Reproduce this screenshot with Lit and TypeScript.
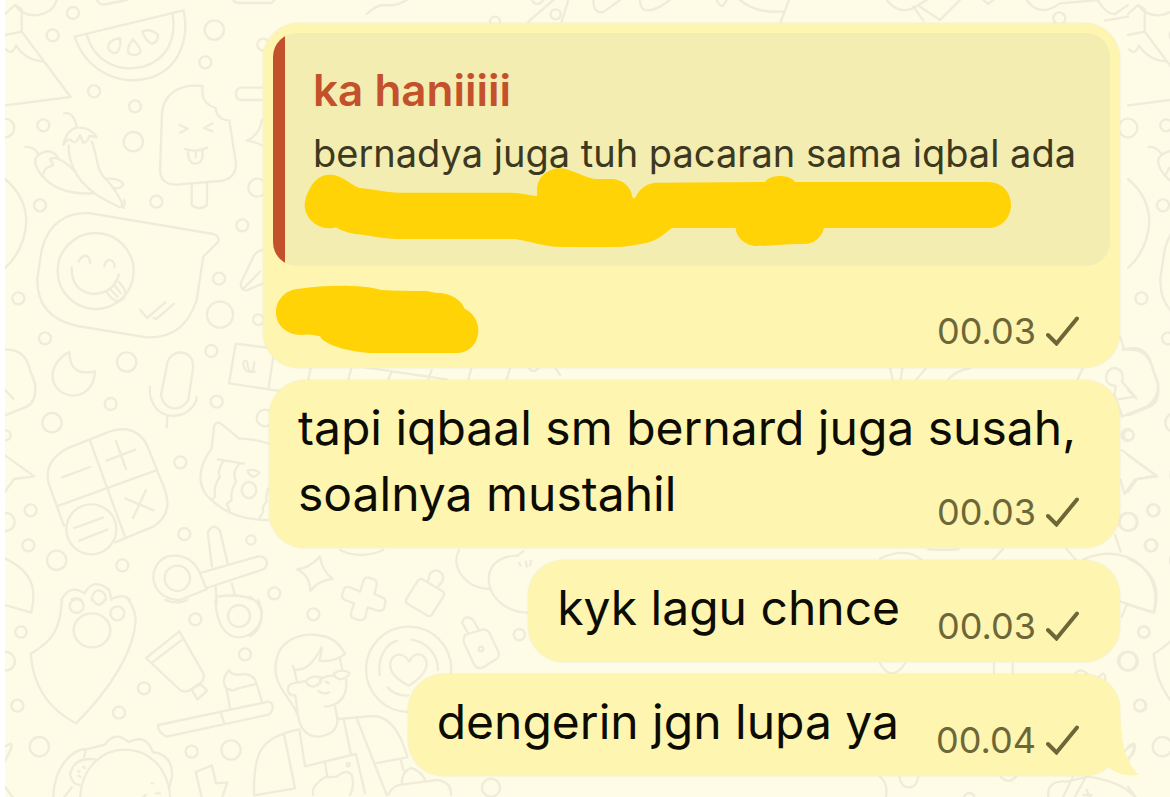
import { LitElement, html, svg, css, nothing } from "lit";
import { customElement, property } from "lit/decorators.js";

const dots = (list: number[][]) => list.map(([x, y, r]) => svg`<circle cx=${x} cy=${y} r=${r}></circle>`);

@customElement("chat-wallpaper")
class ChatWallpaper extends LitElement {
  static styles = css`
    :host { display: block; }
    svg { display: block; width: 1170px; height: 797px; }
    .line { fill: none; stroke: #efecd9; stroke-width: 7; stroke-linecap: round; stroke-linejoin: round; }
    .edge { fill: #ffffff; }
  `;

  render() {
    return html`<svg viewBox="0 0 1170 797" aria-hidden="true">
      <defs>
        <g id="tile" class="line">
          <g transform="scale(.33333)">
            ${dots([[219,39,18],[158,106,18],[643,90,29],[616,187,18],[790,134,18],[282,274,18],[405,319,18],[130,376,18],[400,425,29],[15,384,28],[772,563,27]])}
            <path d="M15 42L45 15L65 28V95L15 105M65 95L212 291L15 316M45 15Q68 48 110 46Q160 38 170 0M18 148Q36 168 48 136Q76 180 128 184"/>
            <path d="M291 0Q300 18 320 12L380 0M700 0Q703 9 715 9H810Q820 9 823 0"/>
            <path d="M224 110L551 31C570 120 535 205 455 232C350 263 255 205 224 110ZM260 102C280 180 350 220 430 200C500 178 530 120 518 42"/>
            <path d="M360 114Q325 120 324 143Q332 163 350 158Q364 145 360 114ZM398 118Q378 145 386 160Q404 172 421 158Q426 146 398 118ZM427 94Q450 84 474 104Q476 124 457 131Q440 128 427 94Z"/>
            <path d="M608 258C540 250 490 280 486 340L480 510Q482 555 530 554L660 543Q708 538 708 490L688 361Q650 360 647 324Q600 310 608 258M575 555V615Q598 635 621 615V550"/>
            <path d="M538 375L563 386L540 398M637 370L612 384L637 394M555 447Q590 458 622 443M564 452Q564 492 587 491Q612 490 607 450M587 456V472"/>
            <path d="M192 340Q222 335 230 382M190 434Q200 390 230 383Q270 380 290 411L268 408Q262 428 250 428L240 405Q230 432 218 425Q206 410 190 434M206 436C205 500 240 560 316 600M275 425C295 470 285 510 320 540Q350 570 372 624"/>
            <path d="M76 441Q100 438 117 464Q150 440 174 473L150 476L160 495L138 505L126 528Q90 480 117 464M130 530Q175 585 280 580M170 475Q200 485 225 515M320 536Q360 535 370 552Q365 568 338 564"/>
            <path d="M785 263H722Q708 266 708 281Q708 298 722 300H785M785 360Q780 405 740 422Q765 425 785 436"/>
            <path d="M15 537Q78 590 79 665Q74 750 15 804"/>
          </g>
          <g transform="translate(0 200) scale(.33333)">
            ${dots([[120,16,18],[469,5,18],[727,76,18],[657,236,18],[660,344,39],[775,359,16],[55,295,18],[135,415,18],[380,486,29],[634,453,18]])}
            <path d="M316 0L358 22Q380 20 372 0M272 40L640 102Q660 108 655 125L610 170L590 300C565 375 520 415 440 412L232 378C150 360 110 310 112 235L125 150C145 65 205 35 272 40Z"/>
            <circle cx="287" cy="213" r="114"/>
            <path d="M236 184Q248 162 262 169Q270 174 270 190M313 200Q315 180 330 180Q344 184 344 202M215 202Q214 275 280 282Q340 280 357 224M322 278Q335 300 352 304Q382 300 374 268L357 246M333 270L352 290M346 258L362 280"/>
            <path d="M421 330L441 354L496 307M461 354L468 358L522 311"/>
            <path d="M208 456C210 510 235 525 285 514C282 565 250 588 215 587C145 577 135 495 208 456Z"/>
            <path d="M500 500C505 440 585 445 579 505L565 600C540 640 490 630 483 585ZM450 560Q448 590 455 600M590 590L588 600"/>
            <path d="M840 448L707 431L687 550L840 573M820 470L805 568M785 150Q765 155 758 175L722 250Q722 272 740 271L790 250M728 268L780 215M764 515Q742 520 742 486Q730 475 730 495Q735 520 758 515L763 487"/>
            <path d="M15 449Q75 445 90 510L105 550Q110 590 95 605M15 570L40 596"/>
          </g>
          <g transform="translate(0 400) scale(.33333)">
            ${dots([[332,12,18],[650,5,18],[156,68,29],[541,187,18],[795,54,25],[92,331,18],[85,436,18],[170,481,29],[553,402,18],[753,420,14],[367,496,18],[17,366,27],[17,106,15],[532,535,38]])}
            <path d="M455 0Q470 45 520 48Q570 45 590 0M502 48L500 82M15 46L80 20Q98 10 100 0M15 166L103 229L42 237L15 275"/>
            <path d="M200 146L330 94Q410 70 443 140L493 265Q522 340 460 380L345 427M192 378L146 250Q130 185 200 146M270 122L374 408M176 317L468 211"/>
            <circle cx="274" cy="388" r="75"/>
            <path d="M186 232L270 201M320 182L406 149M348 123L378 207M376 295L460 331M438 270L399 354M223 384L309 353M238 422L322 389"/>
            <path d="M805 130Q755 115 718 116L662 70Q647 62 642 80L635 145C580 220 600 275 640 305Q700 360 805 360M653 178L732 191M670 184Q650 215 660 230Q640 255 645 290L635 300M718 192Q695 215 708 245Q690 275 695 300L680 312L690 333M742 212Q758 245 778 218Q765 205 742 212M805 265Q795 290 800 305Q785 320 790 335L778 355"/>
            <ellipse cx="747" cy="270" rx="22" ry="24"/>
            <path d="M620 568L540 600C450 600 435 500 500 470C560 455 590 495 600 520ZM604 518L775 469Q800 468 801 490Q800 505 785 510L620 564M636 500L623 398Q640 365 660 393L683 490M647 560L650 610M695 550L705 585M650 590Q720 580 755 598"/>
            <path d="M15 475Q110 520 99 600M184 600Q210 550 254 580Q280 530 328 570L334 600M340 595Q370 580 390 600M274 600Q280 570 296 571Q318 575 318 600M215 598Q230 590 245 600"/>
          </g>
          <g transform="translate(0 600) scale(.33333)">
            ${dots([[230,18,21],[352,40,21],[63,96,17],[586,58,18],[735,163,18],[432,265,18],[357,338,18],[52,317,18],[118,440,29],[575,455,18],[693,450,29],[717,48,33],[17,184,28]])}
            <path d="M186 0C180 90 160 120 92 162C100 260 150 330 228 370C330 270 405 150 407 55Q402 20 385 0M279 0Q296 28 314 0M15 15L94 38L100 0M496 0Q530 15 562 0"/>
            <ellipse cx="276" cy="91" rx="55" ry="51"/>
            <path d="M538 94L438 174L540 270Q560 280 575 267L600 250Q615 240 610 220ZM545 120L460 185M575 268L602 253L622 272L592 299Z"/>
            <path d="M646 0C650 80 680 112 717 112C760 110 790 70 785 30L775 0M690 325L680 268Q660 240 687 210Q695 230 735 222Q765 225 770 252L786 305M680 265L698 272L714 265L770 252M475 375L805 305Q820 310 818 325Q815 340 805 344L500 410Q470 395 475 375ZM662 338L673 371"/>
            <path d="M160 595C160 500 220 445 258 448L315 434Q345 390 385 426Q440 400 458 456Q520 465 516 530L508 560M258 448L252 472M240 595C250 400 500 400 511 595M285 478Q220 470 210 525Q220 555 238 555M190 595L215 562M235 512L238 516M236 527L241 531M250 500L254 505M430 590L438 585M468 580L480 580M455 550H459"/>
            <path d="M587 516L636 496L648 550L682 547L665 597M587 516L605 592M15 440Q55 410 15 482M15 560L40 595"/>
          </g>
        </g>
      </defs>
      <use href="#tile"></use>
      <use href="#tile" x="1123"></use>
      <g class="line" transform="translate(250 540) scale(.33333)">
        ${dots([[73,160,18],[190,223,18],[808,284,17],[693,327,7],[723,743,27],[295,674,5]])}
        <path d="M0 170Q35 190 35 230Q30 275 0 288M141 88Q180 85 210 49Q215 90 248 117Q205 120 181 153Q180 105 141 88Z"/>
        <path d="M342 118Q348 110 358 113L375 120Q382 125 380 135L373 162L398 173Q408 178 406 187L402 206Q395 215 380 211L353 202L345 235Q338 242 325 240L308 234Q301 230 303 218L312 190L285 180Q274 174 277 162L283 145Q290 138 300 142L330 155Z"/>
        <path d="M515 116L580 155Q584 160 580 170L545 225Q540 230 530 226L470 190Q465 183 470 175L505 120ZM535 120Q538 90 560 91Q585 98 578 122L564 140M655 281L636 248Q645 220 670 240L685 267M645 285L700 268Q710 268 718 278L745 335Q750 350 740 356L700 382Q685 390 673 375L642 308Q638 295 645 285"/>
        <path d="M270 30Q330 60 400 30M627 30C600 85 650 145 718 147M840 218C740 220 690 130 730 75Q760 45 800 48L820 34M808 70L812 76M828 65L830 80M843 62L840 76"/>
        <circle cx="476" cy="388" r="128"/>
        <path d="M389 405C382 350 410 310 442 302M484 299C530 305 565 345 564 390M412 442Q435 468 475 467M478 365C455 328 415 345 421 382C427 410 455 425 476 437C505 420 530 400 530 370C525 335 490 335 478 365Z"/>
        <path d="M144 528C125 470 65 440 78 365C90 290 165 280 200 285Q260 290 285 342Q250 368 208 362Q215 340 215 322C190 370 165 395 132 388L128 378M132 388L142 428L168 423M270 355L277 390M210 420Q225 405 252 408M252 400Q275 385 298 398Q295 415 270 418Q255 415 252 400M168 423Q185 405 213 412Q218 432 190 440Q170 438 168 423M142 428Q108 430 115 455Q120 470 136 465L144 528Q155 592 210 590Q265 580 262 535L255 499M289 420Q293 495 225 500M205 453Q220 465 237 457M227 425L237 430"/>
        <path d="M265 537L370 528C425 530 455 590 472 650M12 760C10 640 30 590 148 568L165 679L318 642L345 760M103 587L135 745L12 766M282 542L302 640M322 540L410 765M375 670L472 652M225 666L232 712L260 710Q290 685 305 705Q315 740 300 765M225 712Q180 740 190 765M452 658L460 690M415 765Q425 735 460 733L560 720Q605 725 603 765M455 733Q455 695 482 684Q510 690 525 718"/>
      </g>
      <g class="line" transform="translate(880 280) scale(.33333)">
        ${dots([[743,465,18],[743,725,27],[819,691,18],[812,796,18]])}
        <path d="M720 170L732 205M728 210Q790 190 810 240L832 305Q842 350 800 380L725 410M702 340L725 405M678 295Q680 265 704 264Q735 270 726 305L766 350L702 360L707 318Q680 315 678 295M592 300L608 265M725 510L828 586L765 598L734 642L722 600M705 765L722 815M610 838C700 800 780 830 815 900M30 264L38 298M67 264L62 298M110 298L138 265M205 298Q230 270 272 264M0 835Q80 800 125 840M340 838L368 808M560 808L588 840M145 808Q190 812 235 808"/>
      </g>
      <g class="line" transform="translate(880 550) scale(.33333)">
        ${dots([[791,246,17],[742,333,28],[779,466,17],[268,745,16]])}
        <path d="M815 90Q835 140 820 187L722 155M740 165L725 200M0 340Q35 400 75 340M342 340V372M398 340V372M585 372Q600 350 622 372M655 385Q675 355 676 390M730 610Q745 585 765 588Q765 615 744 625M58 680Q65 715 90 712Q110 710 114 682M362 680Q385 705 408 680M505 740C500 710 520 690 560 695L625 680C690 690 740 710 768 745M550 740L578 682M585 740L615 685M610 735L635 735M620 720L630 740M0 680Q25 700 18 740"/>
      </g>
      <g class="line" transform="translate(260 260) scale(.33333)">
        <path d="M152 325L145 358M274 325L265 358M395 335L385 358M515 330L505 358M635 322L625 358M750 325L740 358M300 320L560 358M805 322Q820 345 838 322M885 322L900 345"/>
      </g>
      <g class="line" transform="scale(.33333)">
        ${dots([[1485,65,15],[1667,43,15],[3178,55,18]])}
        <path d="M1100 42Q1130 15 1150 15Q1190 20 1220 0M1585 65L1660 0M1685 65L1705 0M1595 0Q1610 25 1630 0M1780 0Q1780 42 1810 36L1860 0M1920 0Q1920 50 1980 20L2010 0M2150 0Q2165 35 2180 0M2220 0Q2270 42 2350 34M2367 0L2342 66M2660 0Q2700 50 2750 18L2780 0M2740 20L2770 62M2760 20L2820 60L2880 0M2950 0L2965 12L2980 0M3080 0Q3120 55 3180 10L3293 0Q3320 45 3345 42L3384 15M3315 62L3384 50M3275 160Q3290 120 3290 110"/>
      </g>
      <rect class="edge" width="5" height="797"></rect>
    </svg>`;
  }
}

@customElement("chat-bubble")
class ChatBubble extends LitElement {
  @property() text = "";
  @property() time = "";
  @property() author = "";
  @property() quote = "";
  @property({ type: Boolean }) long = false;
  @property({ type: Boolean }) last = false;

  static styles = css`
    :host { display: block; max-width: 100%; }
    .bubble {
      position: relative; box-sizing: border-box; display: flex; align-items: flex-end; gap: 37px;
      padding: 15px 41px 21px 29px; border-radius: 36px; background: #fdf5b0;
      font-size: 48px; line-height: 66px; box-shadow: 0 0 2px #e9e5c6;
    }
    .long { display: flow-root; width: 851px; max-width: 100%; padding-right: 30px; }
    .long .text { display: inline; }
    .long .meta { float: right; margin: 36px 11px 0 0; }
    .reply { flex-direction: column; gap: 0; width: 857px; max-width: 100%; padding: 10px 10px 22px; }
    .text { margin: 0; color: #0d0c02; }
    .meta { display: flex; align-items: center; gap: 10px; height: 30px; color: #6d6738; }
    time { font-size: 36px; line-height: 30px; }
    .check { display: block; width: 33px; height: 30px; fill: none; stroke: currentColor; stroke-width: 4; stroke-linecap: round; }
    .reply .meta { margin: 50px 31px 0 0; }
    .quote {
      box-sizing: border-box; width: 100%; height: 233px; margin: 0; padding: 31px 28px 0 40px;
      border-radius: 24px; background: linear-gradient(to right, #c2512c 12px, #f3edb2 12px);
    }
    .author { display: block; font-size: 44px; font-style: normal; font-weight: 600; line-height: 52px; color: #c2512c; }
    .quoted { margin: 0; padding-top: 11px; font-size: 38px; line-height: 52px; color: #3c3920; white-space: nowrap; }
    .marker { position: absolute; inset: 0 auto auto 0; width: 857px; height: 344px; fill: #ffd305; }
    .tail { position: absolute; right: -19px; bottom: 0; width: 60px; height: 76px; fill: #fdf5b0; }
  `;

  render() {
    const meta = html`<span class="meta"><time>${this.time}</time><svg class="check" viewBox="0 0 33 30" role="img" aria-label="Sent"><path d="M2 19L10.500 27.500L31 2.500"/></svg></span>`;
    if (this.quote) {
      return html`<article class="bubble reply">
        <blockquote class="quote"><cite class="author">${this.author}</cite><p class="quoted">${this.quote}</p></blockquote>
        ${meta}
        <svg class="marker" viewBox="9 39 2571 1032" aria-hidden="true">
          <path d="M205 494C245 493 262 518 298 534C340 536 370 548 420 548H755C785 549 805 556 831 558V540C832 498 866 474 905 475C940 480 970 502 1005 507H1050C1085 506 1115 530 1117 562Q1122 568 1127 562C1138 535 1160 522 1185 518L1515 516C1530 492 1590 492 1605 516H2185C2230 517 2253 550 2253 585C2253 622 2225 654 2185 654H1692C1685 685 1660 702 1630 702C1580 701 1535 708 1490 708C1455 708 1428 680 1427 654H1235C1210 675 1190 692 1160 698C1120 706 1095 711 1060 711H910C855 711 820 696 765 687H415C365 687 330 675 285 672C260 668 240 660 228 652C175 665 134 625 134 585C135 560 145 548 150 535C162 510 185 495 205 494Z"/>
          <path d="M118 836C195 825 300 822 365 840C420 844 460 842 500 843L525 848C575 848 603 870 614 896C640 908 655 935 655 960C655 1000 628 1029 590 1029H330C285 1027 195 1010 180 979C160 974 145 971 125 975C78 975 48 945 48 907C48 870 76 838 118 836Z"/>
        </svg>
      </article>`;
    }
    return html`<article class="bubble ${this.long ? "long" : ""}">
      <p class="text">${this.text}</p>${meta}
      ${this.last ? html`<svg class="tail" viewBox="0 0 60 76" aria-hidden="true"><path d="M0 0H41C41 35 44 61 60 75C45 77 36 72 29 67C20 73 10 76 0 76Z"/></svg>` : nothing}
    </article>`;
  }
}

@customElement("app-root")
class AppRoot extends LitElement {
  static styles = css`
    :host {
      position: relative; display: block; box-sizing: border-box; min-height: 100vh; overflow: hidden;
      background: #fefce7; font-family: Inter, "Liberation Sans", sans-serif;
    }
    .wallpaper { position: absolute; inset: 0; }
    .thread { position: relative; display: flex; flex-direction: column; align-items: flex-end; gap: 12px; padding: 23px 50px 21px 12px; }
  `;

  render() {
    return html`
      <chat-wallpaper class="wallpaper"></chat-wallpaper>
      <main class="thread">
        <chat-bubble author="ka haniiiii" quote="bernadya juga tuh pacaran sama iqbal ada" time="00.03"></chat-bubble>
        <chat-bubble long text="tapi iqbaal sm bernard juga susah, soalnya mustahil" time="00.03"></chat-bubble>
        <chat-bubble text="kyk lagu chnce" time="00.03"></chat-bubble>
        <chat-bubble last text="dengerin jgn lupa ya" time="00.04"></chat-bubble>
      </main>`;
  }
}
